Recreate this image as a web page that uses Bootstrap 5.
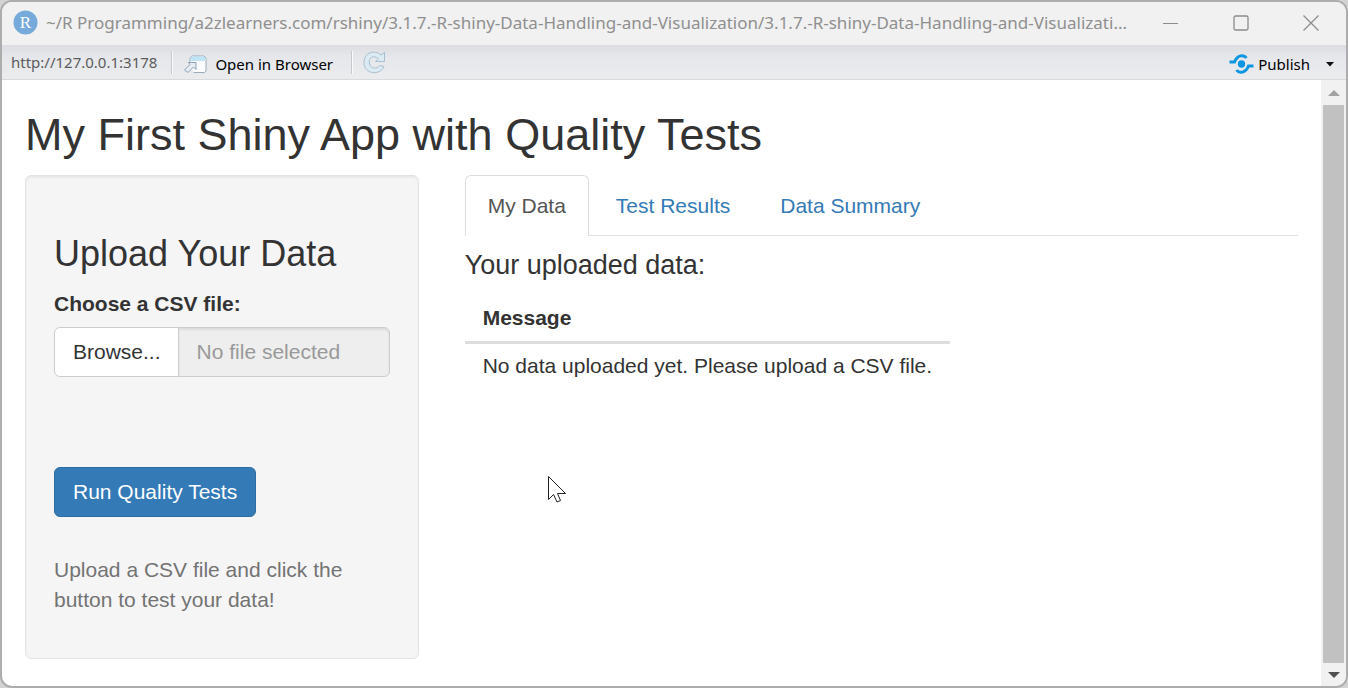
<!DOCTYPE html>
<html lang="en">
<head>
<meta charset="utf-8">
<meta name="viewport" content="width=device-width, initial-scale=1">
<title>My First Shiny App with Quality Tests</title>
<link href="https://cdn.jsdelivr.net/npm/bootstrap@5.3.0/dist/css/bootstrap.min.css" rel="stylesheet">
<style>
  body { background: #d3d3d3; font-family: "Liberation Sans", Arial, sans-serif; font-size: 21px; line-height: 30px; color: #333; }
  .app-window { min-height: 100vh; border: 2px solid #adadad; border-radius: 12px; background: #fff; }
  .title-strip { height: 43px; background: #f1f1f1; color: #8f8f8f; font-family: "Noto Sans", "Open Sans", sans-serif; font-size: 17px; line-height: 24px; padding: 0 27px 2px 11px; }
  .title-text { margin-left: 8px; }
  .win-buttons { gap: 54px; }
  .win-buttons button, .tool-strip button { border: 0; background: none; padding: 0; color: inherit; }
  .tool-strip { height: 35px; background: linear-gradient(#dcdde1, #e5e7ea 35%, #ebecee); border-bottom: 1px solid #d8dadd; font-family: "Noto Sans", "Open Sans", sans-serif; font-size: 15px; line-height: 24px; padding: 0 12px 0 9px; }
  .tool-strip a { color: #5c5c5c; }
  .tool-strip .tool-btn { color: #000; padding-top: 4px; }
  .tool-line { width: 2px; height: 23px; border-left: 1px solid #c5c8cc; background: #fafafa; margin: 0 10px 0 14px; }
  .tool-line + button { margin-right: 4px; }
  .page-area { padding: 0 23px 26px; }
  .page-area h2 { font-size: 45px; line-height: 50px; font-weight: 400; margin: 30px 0 15px; }
  .page-area .row { --bs-gutter-x: 46px; }
  .side-well { background: #f5f5f5; border: 1px solid #e3e3e3; border-radius: 6px; padding: 28px 28px 43px; box-shadow: inset 0 2px 2px rgba(0,0,0,.05); }
  .side-well h3 { font-size: 36px; line-height: 40px; font-weight: 400; margin: 30px 0 15px; }
  .side-well .form-label { font-weight: 700; margin-bottom: 8px; }
  .side-well .input-group { margin-bottom: 90px; }
  .side-well .btn { font-size: 21px; line-height: 30px; padding: 9px 18px; border-radius: 6px; }
  .side-well .btn-browse { background: #fff; border-color: #ccc; color: #333; padding-right: 17px; }
  .side-well .form-control { font-size: 21px; line-height: 30px; padding: 9px 18px; border-color: #ccc; border-radius: 6px; background: #eee; box-shadow: inset 0 2px 2px rgba(0,0,0,.075); }
  .side-well .form-control::placeholder { color: #999; }
  .btn-run, .btn-run:hover { background: #337ab7; border-color: #2e6da4; color: #fff; }
  .help-note { color: #737373; margin: 38px 0 0; }
  .nav-tabs { --bs-nav-tabs-border-color: #ddd; --bs-nav-tabs-border-radius: 6px; --bs-nav-tabs-link-active-color: #555; --bs-nav-tabs-link-active-border-color: #ddd #ddd #fff; gap: 4px; }
  .nav-tabs .nav-link { padding: 15px 22px 14px; --bs-nav-link-color: #337ab7; }
  .page-area h4 { font-size: 27px; line-height: 30px; font-weight: 400; margin: 14px 0 15px; }
  .data-table { width: auto; --bs-table-color: #333; margin: 0; }
  .data-table th, .data-table td { padding: 7px 18px; border: 0; }
  .data-table thead th { padding: 8px 18px; border-bottom: 3px solid #ddd; }
  .scroll-track { width: 25px; background: #f1f1f1; border-radius: 0 0 10px 0; padding: 9px 2px 7px; }
  .scroll-thumb { background: #c1c1c1; }
  .pointer { left: 545px; top: 473px; }
</style>
</head>
<body>
<div class="app-window d-flex flex-column overflow-hidden position-relative">
  <header class="title-strip d-flex align-items-center">
    <svg class="flex-shrink-0" width="25" height="25" viewBox="0 0 25 25" aria-hidden="true"><circle cx="12.500" cy="12.500" r="12" fill="#75aadb"/><text x="12.500" y="18" text-anchor="middle" font-family="Liberation Serif, serif" font-size="17" fill="#fff">R</text></svg>
    <div class="title-text text-nowrap">~/R Programming/a2zlearners.com/rshiny/3.1.7.-R-shiny-Data-Handling-and-Visualization/3.1.7.-R-shiny-Data-Handling-and-Visualizati...</div>
    <div class="win-buttons d-flex align-items-center ms-auto flex-shrink-0">
      <button type="button" aria-label="Minimize" class="d-flex"><svg width="16" height="16" fill="none" stroke="#8c8c8c"><path d="M0 8.500H15"/></svg></button>
      <button type="button" aria-label="Maximize" class="d-flex"><svg width="16" height="16" fill="none" stroke="#8c8c8c" stroke-width="1.300"><rect x="1" y="1" width="14" height="14" rx="1.500"/></svg></button>
      <button type="button" aria-label="Close" class="d-flex"><svg width="16" height="16" fill="none" stroke="#8c8c8c" stroke-width="1.300"><path d="M.5 .5l15 15M15.500 .5l-15 15"/></svg></button>
    </div>
  </header>

  <div class="tool-strip d-flex align-items-center">
    <a href="http://127.0.0.1:3178" class="text-decoration-none">http://127.0.0.1:3178</a>
    <span class="tool-line"></span>
    <button type="button" class="d-flex align-items-center tool-btn">
      <svg class="me-2" width="24" height="19" viewBox="0 0 23 19" aria-hidden="true"><path d="M6.500 9V3L9 1H20.500L22.500 3V16L21 17.500H10" fill="#fafcfd" stroke="#9aabbb"/><path d="M7 6V3L9 1.500H20.500L22 3V6Z" fill="#bfe5f5"/><path d="M5 7.500H12.500V14.500L10 12L4.500 17.500L1 15L6.500 9.500Z" fill="#e7edf2" stroke="#8fa3b5"/></svg>
      Open in Browser
    </button>
    <span class="tool-line"></span>
    <button type="button" aria-label="Reload" class="d-flex"><svg width="23" height="23" viewBox="0 0 23 23"><path d="M18 4L21.500 1.500V10.500H12.500L15.500 7.500C10 3.500 5.500 7 6.300 12C7 18 14.500 18.500 16.500 14.500L21 15.500C17 25 1 23.500 1 11.500C1 1 12 -1.500 18 4Z" fill="#dbeaf3" stroke="#a9bfcf"/></svg></button>
    <button type="button" class="d-flex align-items-center ms-auto tool-btn">
      <svg class="me-1" width="25" height="20" viewBox="0 0 25 20" aria-hidden="true"><circle cx="12.500" cy="10" r="3.700" fill="#0c96e2"/><path d="M.5 8H5.500C8.500 .5 15 .5 17.500 4M24.500 12H19.500C16.500 19.500 10 19.500 7.500 16" fill="none" stroke="#0c96e2" stroke-width="3"/></svg>
      Publish
      <svg class="ms-3" width="8" height="5" aria-hidden="true"><path d="M0 0H8L4 4.500Z" fill="#111"/></svg>
    </button>
  </div>

  <div class="d-flex flex-grow-1">
    <main class="page-area flex-grow-1">
      <h2>My First Shiny App with Quality Tests</h2>
      <div class="row">
        <div class="col-4">
          <form class="side-well">
            <h3>Upload Your Data</h3>
            <label class="form-label d-block" for="csv-name">Choose a CSV file:</label>
            <div class="input-group">
              <button type="button" class="btn btn-browse">Browse...</button>
              <input type="text" class="form-control" id="csv-name" placeholder="No file selected" readonly>
            </div>
            <button type="button" class="btn btn-run">Run Quality Tests</button>
            <p class="help-note">Upload a CSV file and click the button to test your data!</p>
          </form>
        </div>
        <div class="col-8">
          <ul class="nav nav-tabs">
            <li class="nav-item"><a class="nav-link active" href="#my-data" data-bs-toggle="tab">My Data</a></li>
            <li class="nav-item"><a class="nav-link" href="#test-results" data-bs-toggle="tab">Test Results</a></li>
            <li class="nav-item"><a class="nav-link" href="#data-summary" data-bs-toggle="tab">Data Summary</a></li>
          </ul>
          <div class="tab-content">
            <div class="tab-pane active" id="my-data">
              <h4>Your uploaded data:</h4>
              <table class="table data-table">
                <thead><tr><th scope="col">Message</th></tr></thead>
                <tbody><tr><td>No data uploaded yet. Please upload a CSV file.</td></tr></tbody>
              </table>
            </div>
            <div class="tab-pane" id="test-results"></div>
            <div class="tab-pane" id="data-summary"></div>
          </div>
        </div>
      </div>
    </main>
    <div class="scroll-track d-flex flex-column align-items-center flex-shrink-0" aria-hidden="true">
      <svg class="mb-2 flex-shrink-0" width="12" height="8"><path d="M0 7L6 1L12 7Z" fill="#a3a3a3"/></svg>
      <div class="scroll-thumb flex-grow-1 w-100"></div>
      <svg class="mt-2 flex-shrink-0" width="12" height="8"><path d="M0 1H12L6 7Z" fill="#505050"/></svg>
    </div>
  </div>
  <svg class="pointer position-absolute" width="20" height="28" viewBox="0 0 20 28" aria-hidden="true"><path d="M1.500 1.500V24.500L6.500 19.500L10 27L13.500 25.500L10.500 18.500H18.500Z" fill="#fff" stroke="#222"/></svg>
</div>
<script src="https://cdn.jsdelivr.net/npm/bootstrap@5.3.0/dist/js/bootstrap.bundle.min.js"></script>
</body>
</html>
